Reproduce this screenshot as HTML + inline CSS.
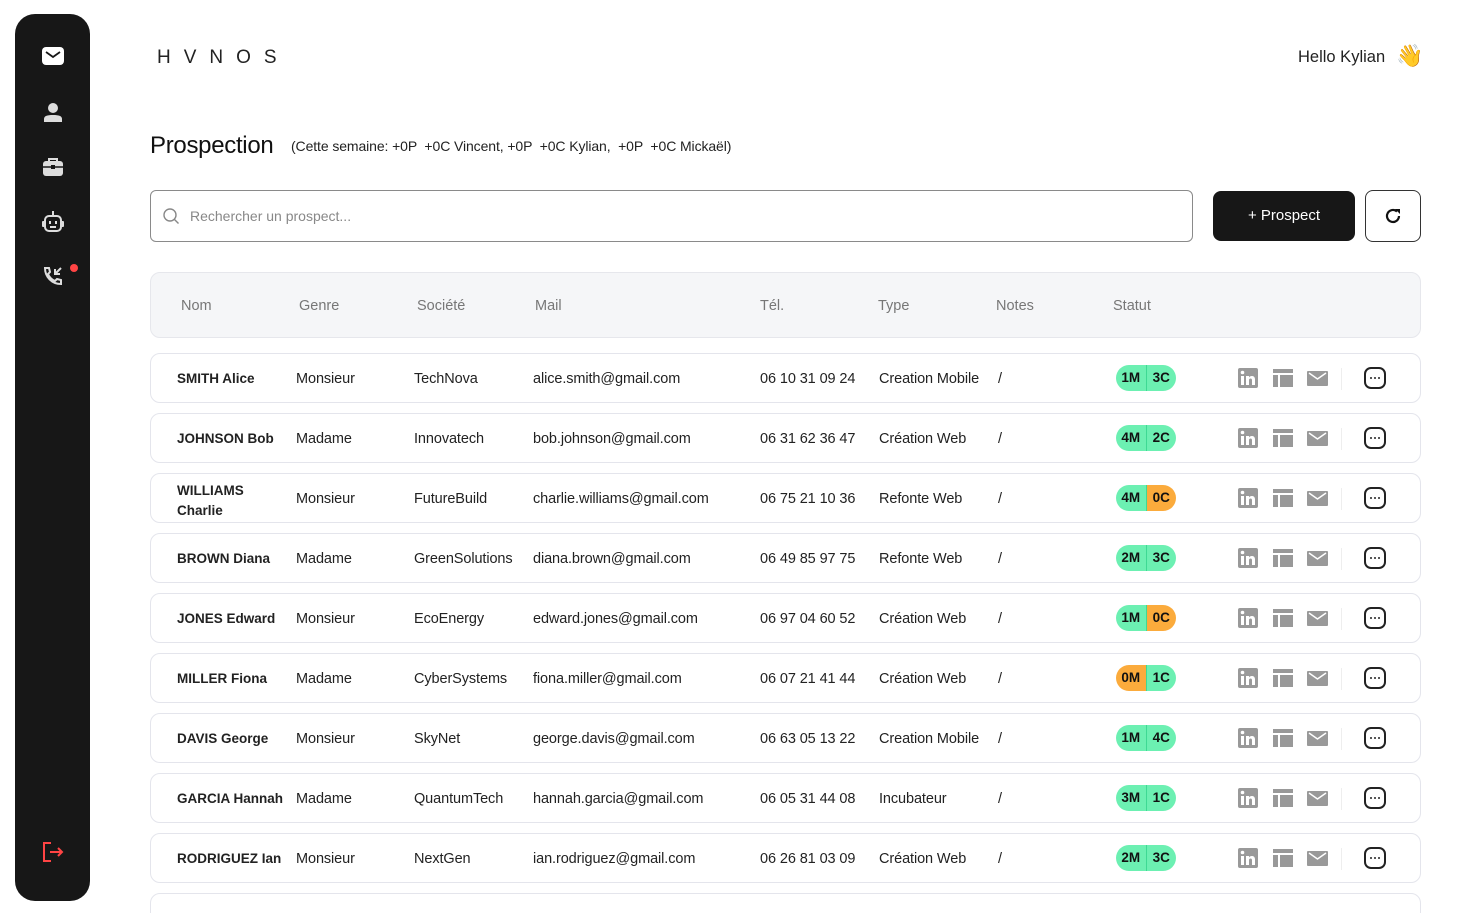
<!DOCTYPE html>
<html><head><meta charset="utf-8">
<style>
*{box-sizing:border-box;margin:0;padding:0}
html,body{width:1463px;height:913px;overflow:hidden}
body{background:#fff;font-family:"Liberation Sans",sans-serif;color:#1f1f1f;position:relative}
.side{position:absolute;left:15px;top:14px;width:75px;height:887px;background:#171717;border-radius:20px}
.side svg{position:absolute;left:26px}
.logo{position:absolute;left:157px;top:47px;font-size:19px;letter-spacing:13px;color:#222}
.hello{position:absolute;left:1298px;top:48px;font-size:16.5px;color:#222}
.hand{position:absolute;left:1396px;top:43px;font-size:22px}
h1{position:absolute;left:150px;top:132px;font-size:24px;font-weight:normal;color:#111;letter-spacing:-.3px}
.week{position:absolute;left:291px;top:138px;font-size:14px;color:#222;letter-spacing:-.1px}
.search{position:absolute;left:150px;top:190px;width:1043px;height:52px;border:1px solid #8a8a8a;border-radius:6px}
.search span{position:absolute;left:39px;top:17px;font-size:14px;color:#888}
.btn{position:absolute;left:1213px;top:191px;width:142px;height:50px;background:#171717;border-radius:8px;color:#fff;font-size:15px;text-align:center;line-height:50px}
.ref{position:absolute;left:1365px;top:190px;width:56px;height:52px;border:1px solid #333;border-radius:8px}
.head{position:absolute;left:150px;top:272px;width:1271px;height:66px;background:#f5f6f8;border:1px solid #e6e7ec;border-radius:10px}
.head span{position:absolute;top:25px;font-size:14.5px;color:#777}
.row{position:absolute;left:150px;width:1271px;height:50px;border:1px solid #e4e5ec;border-radius:10px;background:#fff}
.row .c{position:absolute;top:17px;font-size:14.5px;color:#222;white-space:nowrap;letter-spacing:-.1px}
.row .n{font-weight:bold;font-size:13.5px;left:26px;letter-spacing:0}
.badge{position:absolute;left:965px;top:11px;width:60px;height:26px;border-radius:13px;overflow:hidden;display:flex;font-size:13.5px;font-weight:bold;color:#111}
.badge b{flex:1;text-align:center;line-height:26px}
.g{background:#6cf0b2}.o{background:#fbab3c}
.badge b:first-child{border-right:1px solid #3fd994}
.ic{position:absolute;top:14px}
.sep{position:absolute;left:1190px;top:14px;width:1px;height:22px;background:#eee}
.dots{position:absolute;left:1213px;top:13px;width:22px;height:22px;border:2px solid #222;border-radius:7px;display:flex;align-items:center;justify-content:center;gap:2px}
.dots i{width:2px;height:2px;background:#222;border-radius:50%}
</style></head><body>
<div class="side">
<svg style="top:30px" width="24" height="24" viewBox="0 0 24 24"><rect x="1" y="3" width="22" height="18" rx="4" fill="#fff"/><path d="M5 8l7 5 7-5" stroke="#171717" stroke-width="1.8" fill="none"/></svg>
<svg style="top:86px" width="24" height="24" viewBox="0 0 24 24"><circle cx="12" cy="8" r="5" fill="#ddd"/><path d="M3 22v-3c0-3 3-4 9-4s9 1 9 4v3z" fill="#ddd"/></svg>
<svg style="top:141px" width="24" height="24" viewBox="0 0 24 24"><path d="M8 6V4h8v2" stroke="#ddd" stroke-width="2" fill="none"/><rect x="2" y="6" width="20" height="15" rx="3" fill="#ddd"/><path d="M2 12h20" stroke="#171717" stroke-width="1.5"/><rect x="10" y="10" width="4" height="4" fill="#171717"/></svg>
<svg style="top:195px" width="24" height="26" viewBox="0 0 24 26"><path d="M12 2v5" stroke="#ddd" stroke-width="2"/><rect x="4" y="7" width="16" height="15" rx="4" stroke="#ddd" stroke-width="2" fill="none"/><rect x="1" y="12" width="3" height="6" rx="1" fill="#ddd"/><rect x="20" y="12" width="3" height="6" rx="1" fill="#ddd"/><rect x="8" y="12" width="2" height="3" fill="#ddd"/><rect x="14" y="12" width="2" height="3" fill="#ddd"/><path d="M9 18h6" stroke="#ddd" stroke-width="2"/></svg>
<svg style="top:250px" width="24" height="24" viewBox="0 0 24 24"><path d="M4 4c0 9 7 16 16 16l0-4-4-1-2 2c-3-1-6-4-7-7l2-2-1-4z" stroke="#ddd" stroke-width="2" fill="none"/><path d="M20 4l-6 6M14 5v5h5" stroke="#ddd" stroke-width="2" fill="none"/></svg>
<div style="position:absolute;left:55px;top:250px;width:8px;height:8px;border-radius:50%;background:#f44"></div>
<svg style="top:826px" width="24" height="24" viewBox="0 0 24 24"><path d="M10 3H3v18h7" stroke="#f44" stroke-width="2" fill="none"/><path d="M9 12h12M17 8l4 4-4 4" stroke="#f44" stroke-width="2" fill="none"/></svg>
</div>
<div class="logo">HVNOS</div>
<div class="hello">Hello Kylian</div><div class="hand">👋</div>
<h1>Prospection</h1>
<div class="week">(Cette semaine: +0P &nbsp;+0C Vincent, +0P &nbsp;+0C Kylian, &nbsp;+0P &nbsp;+0C Mickaël)</div>
<div class="search"><svg style="position:absolute;left:11px;top:16px" width="18" height="18" viewBox="0 0 18 18"><circle cx="8" cy="8" r="6" stroke="#888" stroke-width="1.4" fill="none"/><path d="M12.5 12.5l4 4" stroke="#888" stroke-width="1.4"/></svg><span>Rechercher un prospect...</span></div>
<div class="btn">+ Prospect</div>
<div class="ref"><svg style="position:absolute;left:18px;top:16px" width="18" height="18" viewBox="0 0 18 18"><path d="M15 9a6 6 0 1 1-2-4.5" stroke="#111" stroke-width="2.2" fill="none"/><path d="M11 2h5v5z" fill="#111"/></svg></div>
<div class="head"><span style="left:30px">Nom</span><span style="left:148px">Genre</span><span style="left:266px">Société</span><span style="left:384px">Mail</span><span style="left:609px">Tél.</span><span style="left:727px">Type</span><span style="left:845px">Notes</span><span style="left:962px">Statut</span></div>

<div class="row" style="top:353px"><span class="c n">SMITH Alice</span><span class="c" style="left:145px">Monsieur</span><span class="c" style="left:263px">TechNova</span><span class="c" style="left:382px">alice.smith@gmail.com</span><span class="c" style="left:609px">06 10 31 09 24</span><span class="c" style="left:728px">Creation Mobile</span><span class="c" style="left:847px">/</span><div class="badge"><b class="g">1M</b><b class="g">3C</b></div>
<svg class="ic" style="left:1087px" width="20" height="20"><rect width="20" height="20" rx="2" fill="#999"/><rect x="3" y="8" width="3" height="9" fill="#fff"/><circle cx="4.5" cy="4.5" r="1.8" fill="#fff"/><path d="M8 8h3v1.5c1-2 6-2.5 6 2v5.5h-3v-5c0-2-3-2-3 0v5H8z" fill="#fff"/></svg><svg class="ic" style="left:1122px" width="20" height="20"><rect x="0" y="1" width="20" height="4" fill="#999"/><rect x="0" y="7" width="5" height="12" fill="#999"/><rect x="7" y="7" width="13" height="12" fill="#999"/></svg><svg class="ic" style="left:1156px" width="21" height="20"><rect y="3" width="21" height="15" rx="1" fill="#999"/><path d="M2 5l8.5 6 8.5-6" stroke="#fff" stroke-width="1.5" fill="none"/></svg><div class="sep"></div><div class="dots"><i></i><i></i><i></i></div></div>

<div class="row" style="top:413px"><span class="c n">JOHNSON Bob</span><span class="c" style="left:145px">Madame</span><span class="c" style="left:263px">Innovatech</span><span class="c" style="left:382px">bob.johnson@gmail.com</span><span class="c" style="left:609px">06 31 62 36 47</span><span class="c" style="left:728px">Création Web</span><span class="c" style="left:847px">/</span><div class="badge"><b class="g">4M</b><b class="g">2C</b></div>
<svg class="ic" style="left:1087px" width="20" height="20"><rect width="20" height="20" rx="2" fill="#999"/><rect x="3" y="8" width="3" height="9" fill="#fff"/><circle cx="4.5" cy="4.5" r="1.8" fill="#fff"/><path d="M8 8h3v1.5c1-2 6-2.5 6 2v5.5h-3v-5c0-2-3-2-3 0v5H8z" fill="#fff"/></svg><svg class="ic" style="left:1122px" width="20" height="20"><rect x="0" y="1" width="20" height="4" fill="#999"/><rect x="0" y="7" width="5" height="12" fill="#999"/><rect x="7" y="7" width="13" height="12" fill="#999"/></svg><svg class="ic" style="left:1156px" width="21" height="20"><rect y="3" width="21" height="15" rx="1" fill="#999"/><path d="M2 5l8.5 6 8.5-6" stroke="#fff" stroke-width="1.5" fill="none"/></svg><div class="sep"></div><div class="dots"><i></i><i></i><i></i></div></div>

<div class="row" style="top:473px"><span class="c n" style="top:7px;line-height:20px">WILLIAMS<br>Charlie</span><span class="c" style="left:145px">Monsieur</span><span class="c" style="left:263px">FutureBuild</span><span class="c" style="left:382px">charlie.williams@gmail.com</span><span class="c" style="left:609px">06 75 21 10 36</span><span class="c" style="left:728px">Refonte Web</span><span class="c" style="left:847px">/</span><div class="badge"><b class="g">4M</b><b class="o">0C</b></div>
<svg class="ic" style="left:1087px" width="20" height="20"><rect width="20" height="20" rx="2" fill="#999"/><rect x="3" y="8" width="3" height="9" fill="#fff"/><circle cx="4.5" cy="4.5" r="1.8" fill="#fff"/><path d="M8 8h3v1.5c1-2 6-2.5 6 2v5.5h-3v-5c0-2-3-2-3 0v5H8z" fill="#fff"/></svg><svg class="ic" style="left:1122px" width="20" height="20"><rect x="0" y="1" width="20" height="4" fill="#999"/><rect x="0" y="7" width="5" height="12" fill="#999"/><rect x="7" y="7" width="13" height="12" fill="#999"/></svg><svg class="ic" style="left:1156px" width="21" height="20"><rect y="3" width="21" height="15" rx="1" fill="#999"/><path d="M2 5l8.5 6 8.5-6" stroke="#fff" stroke-width="1.5" fill="none"/></svg><div class="sep"></div><div class="dots"><i></i><i></i><i></i></div></div>

<div class="row" style="top:533px"><span class="c n">BROWN Diana</span><span class="c" style="left:145px">Madame</span><span class="c" style="left:263px">GreenSolutions</span><span class="c" style="left:382px">diana.brown@gmail.com</span><span class="c" style="left:609px">06 49 85 97 75</span><span class="c" style="left:728px">Refonte Web</span><span class="c" style="left:847px">/</span><div class="badge"><b class="g">2M</b><b class="g">3C</b></div>
<svg class="ic" style="left:1087px" width="20" height="20"><rect width="20" height="20" rx="2" fill="#999"/><rect x="3" y="8" width="3" height="9" fill="#fff"/><circle cx="4.5" cy="4.5" r="1.8" fill="#fff"/><path d="M8 8h3v1.5c1-2 6-2.5 6 2v5.5h-3v-5c0-2-3-2-3 0v5H8z" fill="#fff"/></svg><svg class="ic" style="left:1122px" width="20" height="20"><rect x="0" y="1" width="20" height="4" fill="#999"/><rect x="0" y="7" width="5" height="12" fill="#999"/><rect x="7" y="7" width="13" height="12" fill="#999"/></svg><svg class="ic" style="left:1156px" width="21" height="20"><rect y="3" width="21" height="15" rx="1" fill="#999"/><path d="M2 5l8.5 6 8.5-6" stroke="#fff" stroke-width="1.5" fill="none"/></svg><div class="sep"></div><div class="dots"><i></i><i></i><i></i></div></div>

<div class="row" style="top:593px"><span class="c n">JONES Edward</span><span class="c" style="left:145px">Monsieur</span><span class="c" style="left:263px">EcoEnergy</span><span class="c" style="left:382px">edward.jones@gmail.com</span><span class="c" style="left:609px">06 97 04 60 52</span><span class="c" style="left:728px">Création Web</span><span class="c" style="left:847px">/</span><div class="badge"><b class="g">1M</b><b class="o">0C</b></div>
<svg class="ic" style="left:1087px" width="20" height="20"><rect width="20" height="20" rx="2" fill="#999"/><rect x="3" y="8" width="3" height="9" fill="#fff"/><circle cx="4.5" cy="4.5" r="1.8" fill="#fff"/><path d="M8 8h3v1.5c1-2 6-2.5 6 2v5.5h-3v-5c0-2-3-2-3 0v5H8z" fill="#fff"/></svg><svg class="ic" style="left:1122px" width="20" height="20"><rect x="0" y="1" width="20" height="4" fill="#999"/><rect x="0" y="7" width="5" height="12" fill="#999"/><rect x="7" y="7" width="13" height="12" fill="#999"/></svg><svg class="ic" style="left:1156px" width="21" height="20"><rect y="3" width="21" height="15" rx="1" fill="#999"/><path d="M2 5l8.5 6 8.5-6" stroke="#fff" stroke-width="1.5" fill="none"/></svg><div class="sep"></div><div class="dots"><i></i><i></i><i></i></div></div>

<div class="row" style="top:653px"><span class="c n">MILLER Fiona</span><span class="c" style="left:145px">Madame</span><span class="c" style="left:263px">CyberSystems</span><span class="c" style="left:382px">fiona.miller@gmail.com</span><span class="c" style="left:609px">06 07 21 41 44</span><span class="c" style="left:728px">Création Web</span><span class="c" style="left:847px">/</span><div class="badge"><b class="o">0M</b><b class="g">1C</b></div>
<svg class="ic" style="left:1087px" width="20" height="20"><rect width="20" height="20" rx="2" fill="#999"/><rect x="3" y="8" width="3" height="9" fill="#fff"/><circle cx="4.5" cy="4.5" r="1.8" fill="#fff"/><path d="M8 8h3v1.5c1-2 6-2.5 6 2v5.5h-3v-5c0-2-3-2-3 0v5H8z" fill="#fff"/></svg><svg class="ic" style="left:1122px" width="20" height="20"><rect x="0" y="1" width="20" height="4" fill="#999"/><rect x="0" y="7" width="5" height="12" fill="#999"/><rect x="7" y="7" width="13" height="12" fill="#999"/></svg><svg class="ic" style="left:1156px" width="21" height="20"><rect y="3" width="21" height="15" rx="1" fill="#999"/><path d="M2 5l8.5 6 8.5-6" stroke="#fff" stroke-width="1.5" fill="none"/></svg><div class="sep"></div><div class="dots"><i></i><i></i><i></i></div></div>

<div class="row" style="top:713px"><span class="c n">DAVIS George</span><span class="c" style="left:145px">Monsieur</span><span class="c" style="left:263px">SkyNet</span><span class="c" style="left:382px">george.davis@gmail.com</span><span class="c" style="left:609px">06 63 05 13 22</span><span class="c" style="left:728px">Creation Mobile</span><span class="c" style="left:847px">/</span><div class="badge"><b class="g">1M</b><b class="g">4C</b></div>
<svg class="ic" style="left:1087px" width="20" height="20"><rect width="20" height="20" rx="2" fill="#999"/><rect x="3" y="8" width="3" height="9" fill="#fff"/><circle cx="4.5" cy="4.5" r="1.8" fill="#fff"/><path d="M8 8h3v1.5c1-2 6-2.5 6 2v5.5h-3v-5c0-2-3-2-3 0v5H8z" fill="#fff"/></svg><svg class="ic" style="left:1122px" width="20" height="20"><rect x="0" y="1" width="20" height="4" fill="#999"/><rect x="0" y="7" width="5" height="12" fill="#999"/><rect x="7" y="7" width="13" height="12" fill="#999"/></svg><svg class="ic" style="left:1156px" width="21" height="20"><rect y="3" width="21" height="15" rx="1" fill="#999"/><path d="M2 5l8.5 6 8.5-6" stroke="#fff" stroke-width="1.5" fill="none"/></svg><div class="sep"></div><div class="dots"><i></i><i></i><i></i></div></div>

<div class="row" style="top:773px"><span class="c n">GARCIA Hannah</span><span class="c" style="left:145px">Madame</span><span class="c" style="left:263px">QuantumTech</span><span class="c" style="left:382px">hannah.garcia@gmail.com</span><span class="c" style="left:609px">06 05 31 44 08</span><span class="c" style="left:728px">Incubateur</span><span class="c" style="left:847px">/</span><div class="badge"><b class="g">3M</b><b class="g">1C</b></div>
<svg class="ic" style="left:1087px" width="20" height="20"><rect width="20" height="20" rx="2" fill="#999"/><rect x="3" y="8" width="3" height="9" fill="#fff"/><circle cx="4.5" cy="4.5" r="1.8" fill="#fff"/><path d="M8 8h3v1.5c1-2 6-2.5 6 2v5.5h-3v-5c0-2-3-2-3 0v5H8z" fill="#fff"/></svg><svg class="ic" style="left:1122px" width="20" height="20"><rect x="0" y="1" width="20" height="4" fill="#999"/><rect x="0" y="7" width="5" height="12" fill="#999"/><rect x="7" y="7" width="13" height="12" fill="#999"/></svg><svg class="ic" style="left:1156px" width="21" height="20"><rect y="3" width="21" height="15" rx="1" fill="#999"/><path d="M2 5l8.5 6 8.5-6" stroke="#fff" stroke-width="1.5" fill="none"/></svg><div class="sep"></div><div class="dots"><i></i><i></i><i></i></div></div>

<div class="row" style="top:833px"><span class="c n">RODRIGUEZ Ian</span><span class="c" style="left:145px">Monsieur</span><span class="c" style="left:263px">NextGen</span><span class="c" style="left:382px">ian.rodriguez@gmail.com</span><span class="c" style="left:609px">06 26 81 03 09</span><span class="c" style="left:728px">Création Web</span><span class="c" style="left:847px">/</span><div class="badge"><b class="g">2M</b><b class="g">3C</b></div>
<svg class="ic" style="left:1087px" width="20" height="20"><rect width="20" height="20" rx="2" fill="#999"/><rect x="3" y="8" width="3" height="9" fill="#fff"/><circle cx="4.5" cy="4.5" r="1.8" fill="#fff"/><path d="M8 8h3v1.5c1-2 6-2.5 6 2v5.5h-3v-5c0-2-3-2-3 0v5H8z" fill="#fff"/></svg><svg class="ic" style="left:1122px" width="20" height="20"><rect x="0" y="1" width="20" height="4" fill="#999"/><rect x="0" y="7" width="5" height="12" fill="#999"/><rect x="7" y="7" width="13" height="12" fill="#999"/></svg><svg class="ic" style="left:1156px" width="21" height="20"><rect y="3" width="21" height="15" rx="1" fill="#999"/><path d="M2 5l8.5 6 8.5-6" stroke="#fff" stroke-width="1.5" fill="none"/></svg><div class="sep"></div><div class="dots"><i></i><i></i><i></i></div></div>

<div class="row" style="top:893px;height:30px"></div>
</body></html>
